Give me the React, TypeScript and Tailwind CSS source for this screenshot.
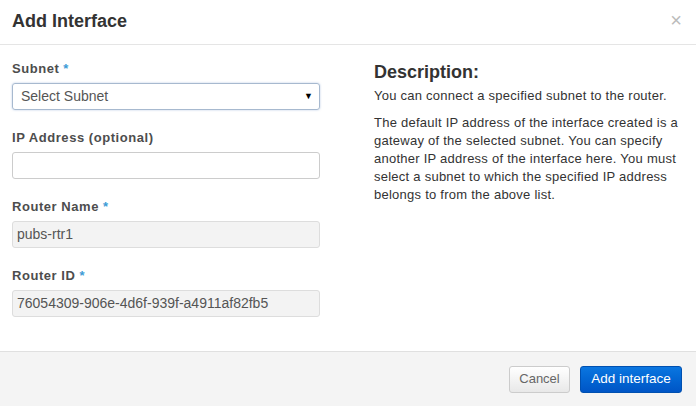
import React from "react";

type FieldProps = {
  label: string;
  required?: boolean;
  children: React.ReactNode;
};

const Field: React.FC<FieldProps> = ({ label, required, children }) => (
  <div className="mb-[19px]">
    <label className="block mb-[5px] h-[18px] leading-[18px] text-[13px] font-bold tracking-[0.55px] text-[#4d4d4d]">
      {label}
      {required && <span className="ml-[4px] text-[#3d9bd6]">*</span>}
    </label>
    {children}
  </div>
);

export default function App() {
  return (
    <div
      className="w-[696px] h-[406px] bg-white flex flex-col text-[#333]"
      style={{ fontFamily: '"Liberation Sans", Arial, sans-serif' }}
    >
      {/* Header */}
      <div className="h-[45px] border-b border-[#e5e5e5] flex items-center justify-between pl-[12px] pr-[14px]">
        <h3 className="text-[18px] font-bold leading-[20px] text-[#333] -mt-[2px]">Add Interface</h3>
        <button className="text-[#bbb] text-[20px] leading-none -mt-[4px]">×</button>
      </div>

      {/* Body */}
      <div className="flex-1 flex pl-[12px] pt-[15px]">
        <div className="w-[308px]">
          <Field label="Subnet" required>
            <div className="h-[27px] rounded-[3px] border border-[#a7b9cf] shadow-[0_0_2px_rgba(102,140,200,0.5)] flex items-center justify-between pl-[8px] pr-[6px] text-[14px] text-[#555]">
              <span>Select Subnet</span>
              <span className="text-[9px] text-black">▼</span>
            </div>
          </Field>
          <Field label="IP Address (optional)">
            <div className="h-[27px] rounded-[3px] border border-[#ccc] bg-white" />
          </Field>
          <Field label="Router Name" required>
            <div className="h-[27px] rounded-[3px] border border-[#ddd] bg-[#f3f3f3] flex items-center px-[4px] text-[14px] text-[#555]">
              pubs-rtr1
            </div>
          </Field>
          <Field label="Router ID" required>
            <div className="h-[27px] rounded-[3px] border border-[#ddd] bg-[#f3f3f3] flex items-center px-[4px] text-[14px] text-[#555]">
              76054309-906e-4d6f-939f-a4911af82fb5
            </div>
          </Field>
        </div>

        <div className="ml-[54px] w-[310px] text-[13px] leading-[18px] tracking-[0.25px] text-[#333]">
          <h3 className="text-[18px] font-bold leading-[22px] mt-[1px] mb-[4px] tracking-normal text-[#333]">
            Description:
          </h3>
          <p className="mb-[9px]">You can connect a specified subnet to the router.</p>
          <p>
            The default IP address of the interface created is a gateway of the selected subnet. You can
            specify another IP address of the interface here. You must select a subnet to which the
            specified IP address belongs to from the above list.
          </p>
        </div>
      </div>

      {/* Footer */}
      <div className="h-[55px] border-t border-[#e0e0e0] bg-[#f4f4f4] flex items-center justify-end gap-[10px] pr-[14px]">
        <button className="h-[27px] w-[61px] rounded-[3px] border border-[#ccc] bg-gradient-to-b from-white to-[#e8e8e8] text-[13px] text-[#666]">
          Cancel
        </button>
        <button className="h-[27px] w-[102px] rounded-[3px] border border-[#0050b0] bg-gradient-to-b from-[#0b76e0] to-[#0055c6] text-[13.5px] text-white">
          Add interface
        </button>
      </div>
    </div>
  );
}
